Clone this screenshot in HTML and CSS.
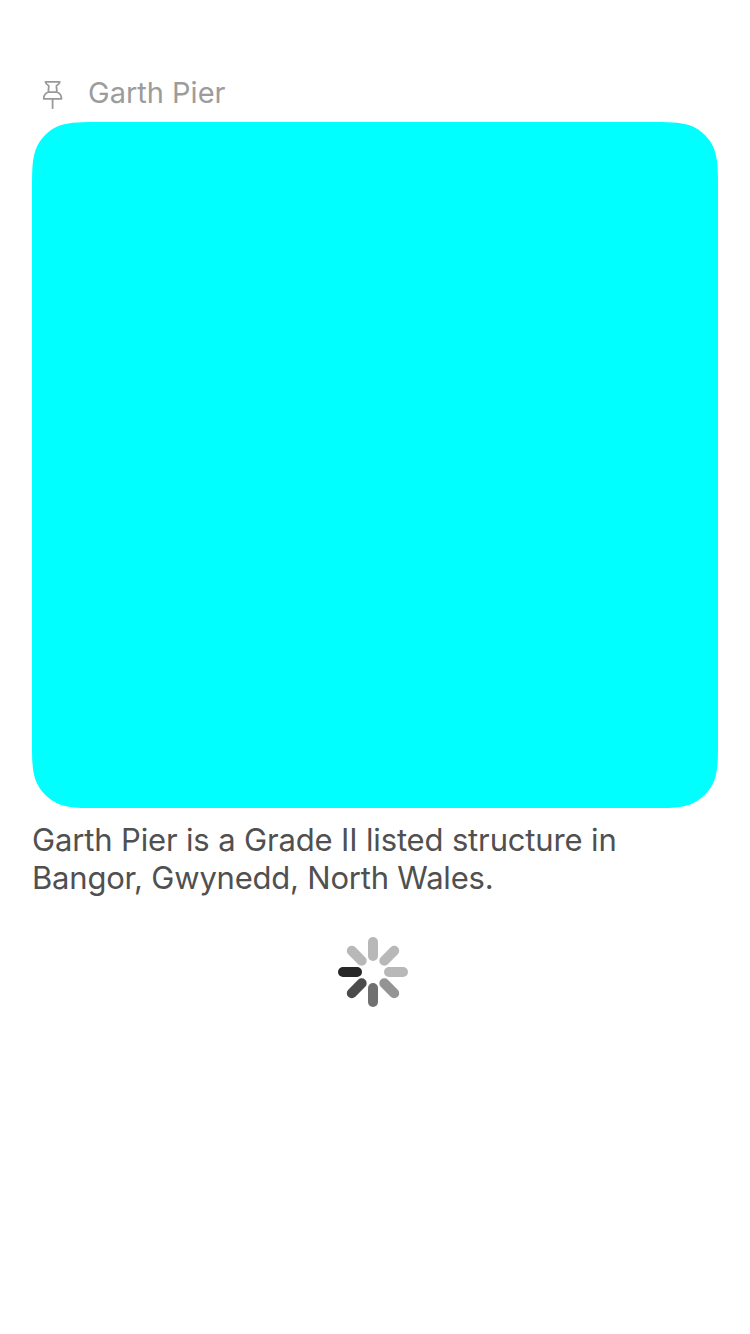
FILE: index.html
```html
<!DOCTYPE html>
<html lang="en">
<head>
<meta charset="utf-8">
<title>Garth Pier</title>
<link rel="stylesheet" href="styles.css">
</head>
<body>
<main class="page">
  <header class="place">
    <svg class="pin" viewBox="0 0 22 30" aria-hidden="true">
      <path d="M3.4 1.9H17.8C17.5 4.1 15.4 5.3 14.4 5.9L14.9 12C17.8 13.1 19.5 15.3 19.5 18.8H1.7C1.7 15.3 3.4 13.1 6.3 12L6.8 5.9C5.8 5.3 3.7 4.1 3.4 1.9ZM6.3 12.1H14.9"/>
      <path d="M10.6 18.8V28.2"/>
    </svg>
    <h1 class="place-name">Garth Pier</h1>
  </header>
  <svg class="photo" viewBox="0 0 686 686" aria-hidden="true">
    <defs>
      <path id="quarter" d="M344 344V0H68.79C48.98 0 39.08 0 28.42 3.37C16.78 7.61 7.61 16.78 3.37 28.42C0 39.08 0 48.98 0 68.79V344Z"/>
    </defs>
    <use href="#quarter"/>
    <use href="#quarter" transform="rotate(90 343 343)"/>
    <use href="#quarter" transform="rotate(180 343 343)"/>
    <use href="#quarter" transform="rotate(270 343 343)"/>
  </svg>
  <p class="description"><span class="line first">Garth Pier is a Grade II listed structure in</span> <span class="line second">Bangor, Gwynedd, North Wales.</span></p>
  <svg class="spinner" viewBox="-35 -35 70 70" aria-label="Loading">
    <path stroke="#b8b8b8" d="M0-16V-30"/>
    <path stroke="#b8b8b8" d="M0-16V-30" transform="rotate(45)"/>
    <path stroke="#b8b8b8" d="M0-16V-30" transform="rotate(90)"/>
    <path stroke="#949494" d="M0-16V-30" transform="rotate(135)"/>
    <path stroke="#707070" d="M0-16V-30" transform="rotate(180)"/>
    <path stroke="#4b4b4b" d="M0-16V-30" transform="rotate(225)"/>
    <path stroke="#272727" d="M0-16V-30" transform="rotate(270)"/>
    <path stroke="#b8b8b8" d="M0-16V-30" transform="rotate(315)"/>
  </svg>
</main>
</body>
</html>
```
FILE: styles.css
```css
body {
  margin: 0;
  background: #fff;
  font-family: Inter, "Liberation Sans", sans-serif;
}

.page {
  box-sizing: border-box;
  display: flex;
  flex-direction: column;
  height: 1334px;
  padding: 74px 32px 0;
}

.place {
  display: flex;
  align-items: center;
  height: 38px;
  margin-bottom: 10px;
  padding-left: 10px;
}

.pin {
  width: 22px;
  height: 30px;
  margin-right: 24px;
  margin-top: 4px;
  fill: none;
  stroke: #999;
  stroke-width: 1.8;
  stroke-linecap: round;
  stroke-linejoin: round;
}

.place-name {
  margin: 0;
  color: #9c9c9c;
  font-size: 29px;
  font-weight: 400;
  line-height: 38px;
}

.photo {
  width: 686px;
  height: 686px;
  flex: none;
  fill: #0ff;
}

.description {
  margin: 13px 0 0;
  color: #505050;
  font-size: 31px;
  line-height: 38px;
}

.line {
  display: block;
  width: max-content;
}

.first {
  letter-spacing: -0.15px;
}

.second {
  letter-spacing: -0.21px;
}

.spinner {
  width: 70px;
  height: 70px;
  margin: 40px 0 0 306px;
  fill: none;
  stroke-width: 10;
  stroke-linecap: round;
}
```
